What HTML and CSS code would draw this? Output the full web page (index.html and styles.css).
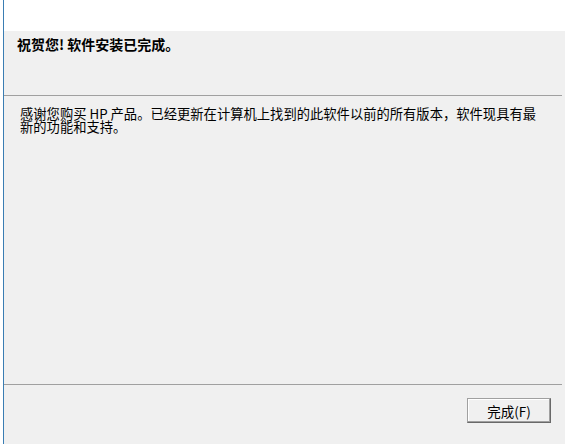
FILE: index.html
```html
<!DOCTYPE html>
<html lang="zh-CN">
  <head>
    <meta charset="UTF-8" />
    <meta name="viewport" content="width=device-width, initial-scale=1.0" />
    <title>安装完成</title>
    <link rel="stylesheet" href="styles.css">
  </head>
  <body>
    <div class="frame">
      <div class="top"></div>
      <div class="panel">
        <div class="header">
          <h2 class="title">祝贺您! 软件安装已完成。</h2>
        </div>
        <div class="rule"></div>
        <div class="content">
          <p class="message">感谢您购买 HP 产品。已经更新在计算机上找到的此软件以前的所有版本，软件现具有最新的功能和支持。</p>
        </div>
        <div class="rule"></div>
        <div class="footer">
          <button type="button" class="btn">完成(<u>F</u>)</button>
        </div>
      </div>
    </div>
  </body>
</html>
```

FILE: styles.css
```css
body {
  margin: 0;
  padding: 0;
  background-color: #fff;
  font-family: "Noto Sans CJK SC", "Liberation Sans", sans-serif;
  color: #000;
}

.frame {
  margin-left: 3px;
  border-left: 1px solid #3a7db3;
  height: 444px;
  width: 561px;
  display: flex;
  flex-direction: column;
}

.top {
  height: 31px;
  background-color: #fff;
}

.panel {
  flex: 1;
  background-color: #f0f0f0;
  display: flex;
  flex-direction: column;
}

.header {
  height: 64px;
  padding-left: 13px;
}

.title {
  margin: 0;
  padding-top: 5px;
  font-size: 14px;
  line-height: 16px;
  font-weight: bold;
}

.rule {
  width: 558px;
  height: 1px;
  background-color: #a0a0a0;
}

.content {
  height: 288px;
  padding-left: 16px;
}

.message {
  margin: 0;
  padding-top: 11px;
  width: 522px;
  font-size: 13.3px;
  line-height: 13px;
}

.footer {
  flex: 1;
  display: flex;
  justify-content: flex-end;
  align-items: flex-start;
  padding-top: 13px;
  padding-right: 14px;
}

.btn {
  width: 84px;
  height: 25px;
  padding: 0;
  font-family: inherit;
  font-size: 13.5px;
  background-color: #f0f0f0;
  border: 1px solid #a0a0a0;
  border-right-color: #696969;
  border-bottom-color: #696969;
  box-shadow: inset -1px -1px 0 #a0a0a0, inset 1px 1px 0 #fff;
}

.btn u {
  text-decoration: none;
}
```
